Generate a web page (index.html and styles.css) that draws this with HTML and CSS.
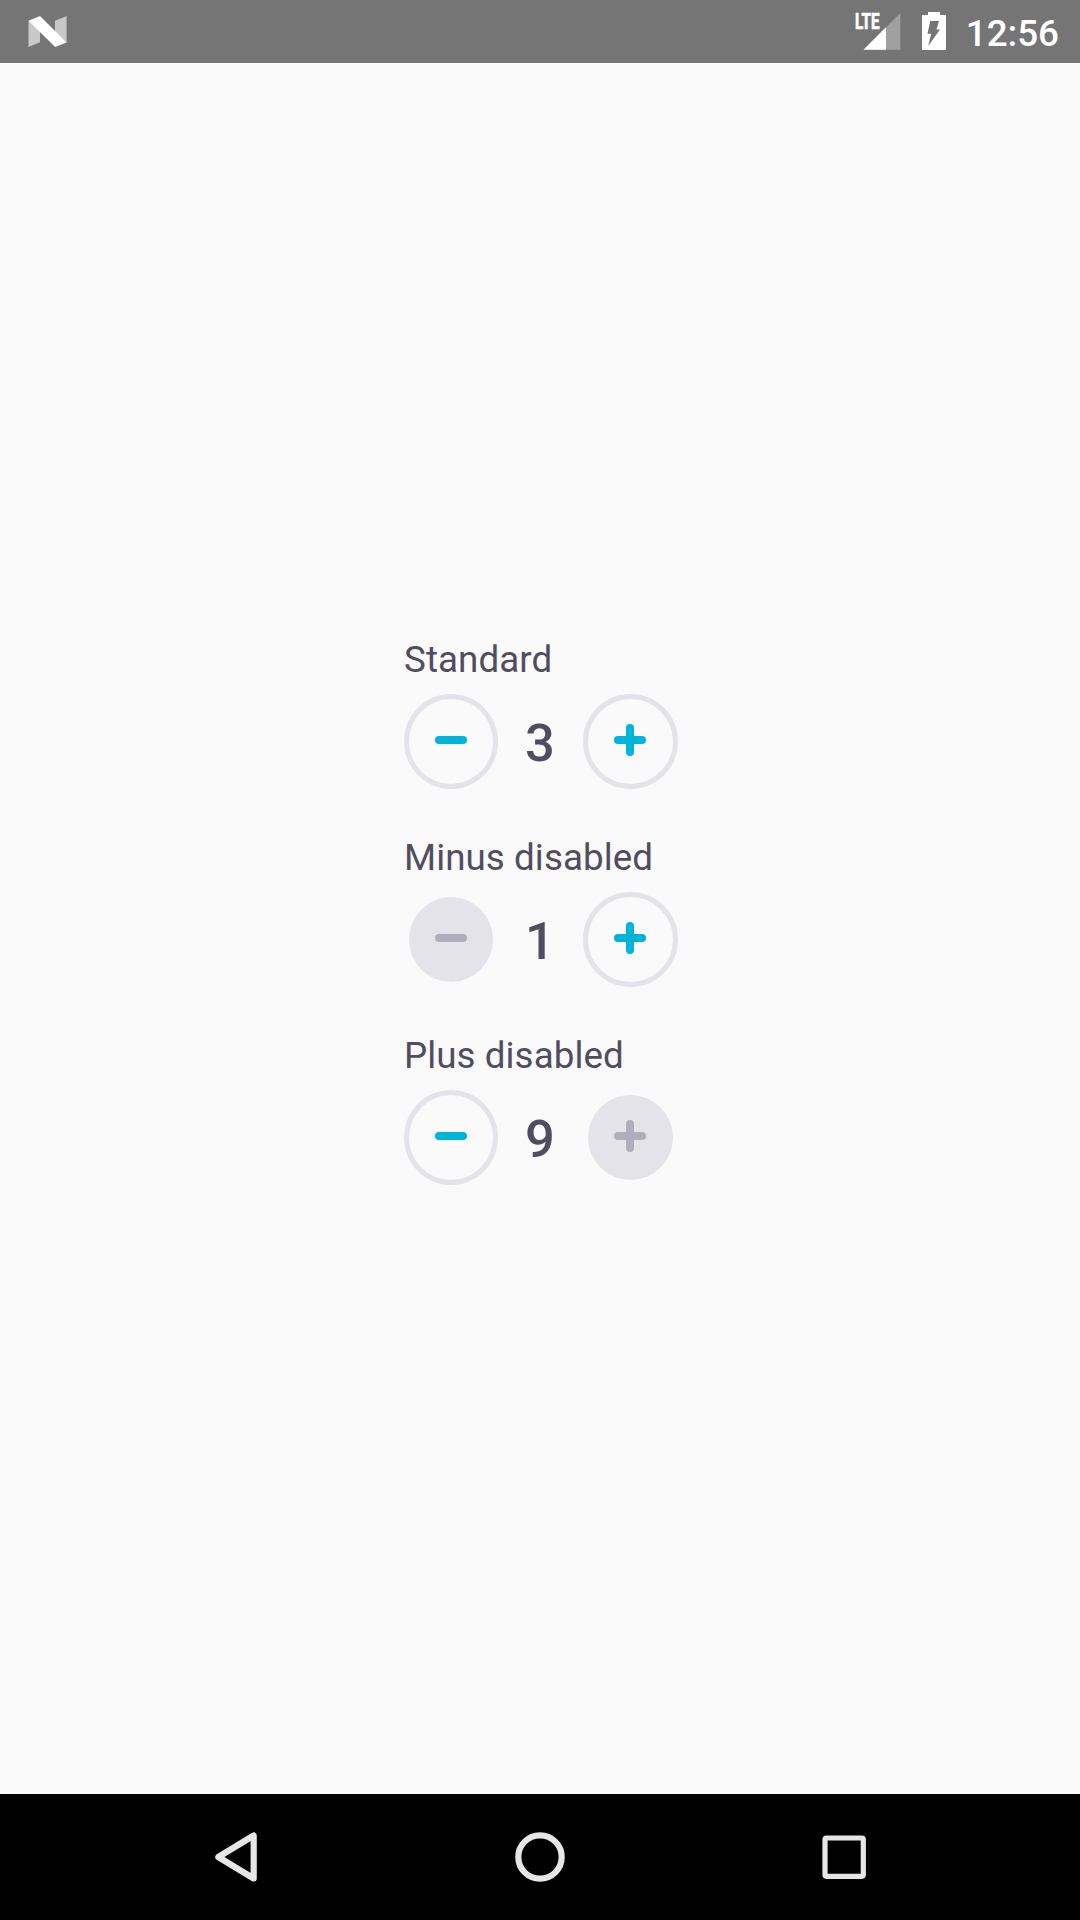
FILE: index.html
```html
<!DOCTYPE html>
<html lang="en">
<head>
<meta charset="utf-8">
<title>Steppers</title>
<link rel="stylesheet" href="styles.css">
</head>
<body>
<header class="status">
  <svg class="status-logo" width="40" height="32" viewBox="0 0 40 32">
    <path class="faded" d="M.5 4.800V31l11.500-4.800V13zM38.600 0v26.600L27 16V4.700z"/>
    <path class="solid" d="M.5 4.800 12 0 38.600 26.400 27.200 31z"/>
  </svg>
  <div class="status-icons">
    <svg class="signal" width="54" height="51" viewBox="-6 -11 54 51">
      <path class="signal-off" d="M45.300 2v36.700H8.500z"/>
      <path class="solid" d="M31 16.300v22.400H8.500z"/>
      <text class="network" x="0" y="18.300" textLength="24.500" lengthAdjust="spacingAndGlyphs">LTE</text>
    </svg>
    <svg class="battery" width="24" height="38" viewBox="0 0 24 38">
      <path class="solid" d="M6 0h12v3h6v35H0V3h6z"/>
      <path class="bolt" d="M8.200 9h8.800l-2.500 8.500H18L6.200 34l3-12.300H5.500z"/>
    </svg>
    <span class="clock">12:56</span>
  </div>
</header>
<main class="content">
  <section class="field">
    <h2 class="label">Standard</h2>
    <div class="stepper">
      <button class="step minus" aria-label="Decrease"><svg width="32" height="32" viewBox="0 0 32 32"><path d="M4 16h24"/></svg></button>
      <span class="value">3</span>
      <button class="step plus" aria-label="Increase"><svg width="32" height="32" viewBox="0 0 32 32"><path d="M4 16h24M16 4v24"/></svg></button>
    </div>
  </section>
  <section class="field">
    <h2 class="label">Minus disabled</h2>
    <div class="stepper">
      <button class="step minus" aria-label="Decrease" disabled><svg width="32" height="32" viewBox="0 0 32 32"><path d="M4 16h24"/></svg></button>
      <span class="value">1</span>
      <button class="step plus" aria-label="Increase"><svg width="32" height="32" viewBox="0 0 32 32"><path d="M4 16h24M16 4v24"/></svg></button>
    </div>
  </section>
  <section class="field">
    <h2 class="label">Plus disabled</h2>
    <div class="stepper">
      <button class="step minus" aria-label="Decrease"><svg width="32" height="32" viewBox="0 0 32 32"><path d="M4 16h24"/></svg></button>
      <span class="value">9</span>
      <button class="step plus" aria-label="Increase" disabled><svg width="32" height="32" viewBox="0 0 32 32"><path d="M4 16h24M16 4v24"/></svg></button>
    </div>
  </section>
</main>
<nav class="navbar">
  <svg width="50" height="50" viewBox="0 0 50 50"><path d="M42.700 3.500v43L7.300 25z"/></svg>
  <svg width="50" height="50" viewBox="0 0 50 50"><circle cx="25" cy="25" r="21.700"/></svg>
  <svg width="50" height="50" viewBox="0 0 50 50"><rect class="recents" x="6" y="6" width="38.300" height="38.300" rx="1.500"/></svg>
</nav>
</body>
</html>
```
FILE: styles.css
```css
* { box-sizing: border-box; }

body {
  margin: 0;
  height: 1920px;
  display: flex;
  flex-direction: column;
  background: #fafafa;
  color: #514d61;
  font-family: Roboto, sans-serif;
}

svg { display: block; flex: none; }

.status {
  height: 63px;
  display: flex;
  justify-content: space-between;
  align-items: flex-start;
  padding: 0 21px 0 28px;
  background: #757575;
  color: #fff;
}

.status-logo { margin-top: 16px; }
.solid { fill: #fff; }
.faded { fill: #c8c8c8; }
.signal-off { fill: #a0a0a0; }
.bolt { fill: #757575; }

.network {
  fill: #fff;
  stroke: #fff;
  stroke-width: 0.7;
  font-size: 22px;
  font-weight: 700;
}

.status-icons {
  display: flex;
  align-items: flex-start;
}

.battery { margin: 12px 20px 0 19px; }

.clock {
  padding-top: 12px;
  font-size: 36.75px;
  font-weight: 500;
  line-height: 43px;
}

.content {
  flex: 1;
  display: flex;
  flex-direction: column;
  align-items: flex-start;
  gap: 47px;
  padding: 575px 0 0 404px;
}

.field {
  display: flex;
  flex-direction: column;
  gap: 13px;
}

.label {
  margin: 0;
  font-size: 36.75px;
  font-weight: 400;
  letter-spacing: 0.07px;
  line-height: 43px;
}

.stepper {
  display: flex;
  align-items: center;
}

.step {
  height: 95px;
  display: flex;
  align-items: flex-start;
  justify-content: center;
  padding: 25px 0 0;
  border: 5px solid #e4e3ea;
  border-radius: 50%;
  background: none;
}

.minus { width: 94px; }

.plus {
  width: 95px;
  padding-right: 1px;
}

.step path {
  stroke: #00b4d9;
  stroke-width: 8;
  stroke-linecap: round;
}

.step:disabled {
  border-color: transparent;
  background: #e4e3ea padding-box;
}

.step:disabled path { stroke: #b0adbc; }

.value {
  width: 85px;
  padding: 3px 1px 0 0;
  text-align: center;
  font-size: 52.5px;
  font-weight: 500;
  line-height: 62px;
}

.navbar {
  height: 126px;
  display: flex;
  align-items: center;
  justify-content: space-between;
  padding: 0 211px;
  background: #000;
}

.navbar svg {
  fill: none;
  stroke: #e6e6e6;
  stroke-width: 6.2;
  stroke-linejoin: round;
}

.navbar .recents { stroke-width: 5.2; }
```
